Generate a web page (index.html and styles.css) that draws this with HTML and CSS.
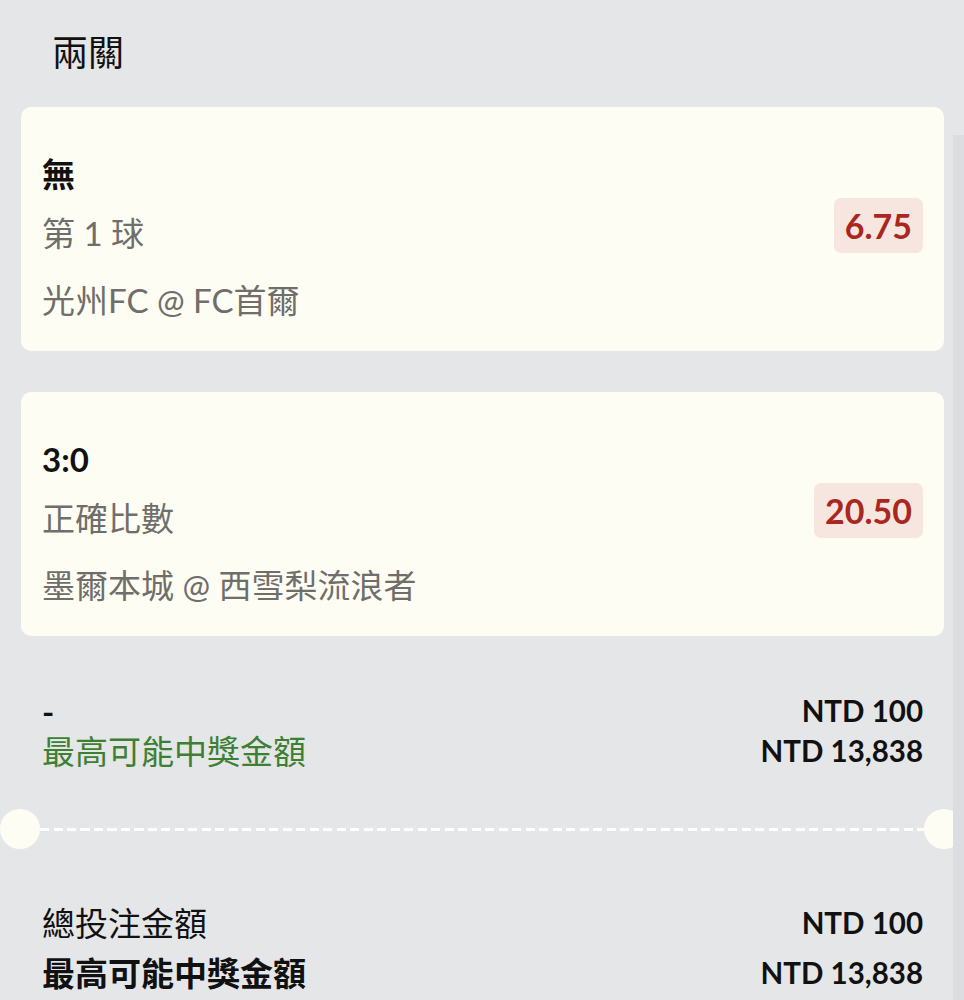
FILE: index.html
```html
<!DOCTYPE html>
<html>
<head>
  <meta charset='utf8'>
  <title>兩關</title>
  <link rel="stylesheet" href="styles.css">
</head>
<body>
  <h1 class='slip-title'>兩關</h1>

  <div class='bet-list'>
    <div class='bet'>
      <div class='bet-info'>
        <div class='bet-pick'>無</div>
        <div class='bet-market'>第 1 球</div>
        <div class='bet-match'>光州FC @ FC首爾</div>
      </div>
      <span class='odds'>6.75</span>
    </div>
    <div class='bet'>
      <div class='bet-info'>
        <div class='bet-pick'>3:0</div>
        <div class='bet-market'>正確比數</div>
        <div class='bet-match'>墨爾本城 @ 西雪梨流浪者</div>
      </div>
      <span class='odds'>20.50</span>
    </div>
  </div>

  <div class='summary'>
    <div class='summary-row'>
      <span class='stake-label'>-</span>
      <span class='amount'>NTD 100</span>
    </div>
    <div class='summary-row'>
      <span class='win-label'>最高可能中獎金額</span>
      <span class='amount'>NTD 13,838</span>
    </div>
  </div>

  <div class='divider'>
    <span class='notch'></span>
    <span class='dash'></span>
    <span class='notch'></span>
  </div>

  <div class='totals'>
    <div class='totals-row'>
      <span>總投注金額</span>
      <span class='amount'>NTD 100</span>
    </div>
    <div class='totals-row'>
      <span class='total-win'>最高可能中獎金額</span>
      <span class='amount'>NTD 13,838</span>
    </div>
  </div>

  <div class='scroll-track'></div>
</body>
</html>
```

FILE: styles.css
```css
html, body {
  margin: 0;
  padding: 0;
}
body {
  background: #e5e6e8;
  font-family: Lato, "Noto Sans CJK TC", sans-serif;
  font-size: 33px;
  color: #111;
  overflow: hidden;
}
.slip-title {
  box-sizing: border-box;
  height: 107px;
  margin: 0;
  padding: 29px 0 0 52px;
  font-size: 36px;
  font-weight: 400;
  line-height: 46px;
  color: #111;
}
.bet-list {
  display: flex;
  flex-direction: column;
  gap: 41px;
  padding: 0 20px 0 21px;
}
.bet {
  display: flex;
  align-items: center;
  justify-content: space-between;
  background: #fefdf3;
  border-radius: 10px;
  padding: 47px 21px 31px;
}
.bet-info {
  line-height: 40px;
}
.bet-pick {
  font-weight: 700;
  color: #111;
}
.bet-market {
  margin-top: 19px;
  color: #6f6e6b;
}
.bet-match {
  margin-top: 27px;
  color: #6f6e6b;
}
.odds {
  margin-bottom: 23px;
  padding: 10px 11px;
  border-radius: 7px;
  background: #f6e6df;
  color: #a9271f;
  font-size: 34px;
  font-weight: 700;
  line-height: 35px;
}
.summary {
  padding: 55px 41px 0 42px;
}
.summary-row, .totals-row {
  display: flex;
  align-items: center;
  justify-content: space-between;
  line-height: 40px;
}
.stake-label {
  font-weight: 700;
}
.win-label {
  color: #3d7f33;
}
.amount {
  font-size: 29.5px;
  font-weight: 700;
  color: #111;
}
.divider {
  display: flex;
  align-items: center;
  margin-top: 38px;
}
.notch {
  width: 40px;
  height: 40px;
  border-radius: 50%;
  background: #fefdf3;
  flex: none;
}
.dash {
  flex: 1;
  height: 3px;
  background: repeating-linear-gradient(90deg, #fff 0 9px, transparent 9px 13.5px);
}
.totals {
  padding: 49px 41px 0 42px;
}
.totals-row {
  line-height: 50px;
}
.total-win {
  font-weight: 700;
}
.scroll-track {
  position: fixed;
  top: 135px;
  right: 0;
  bottom: 0;
  width: 11px;
  background: #dcdde0;
}
```
